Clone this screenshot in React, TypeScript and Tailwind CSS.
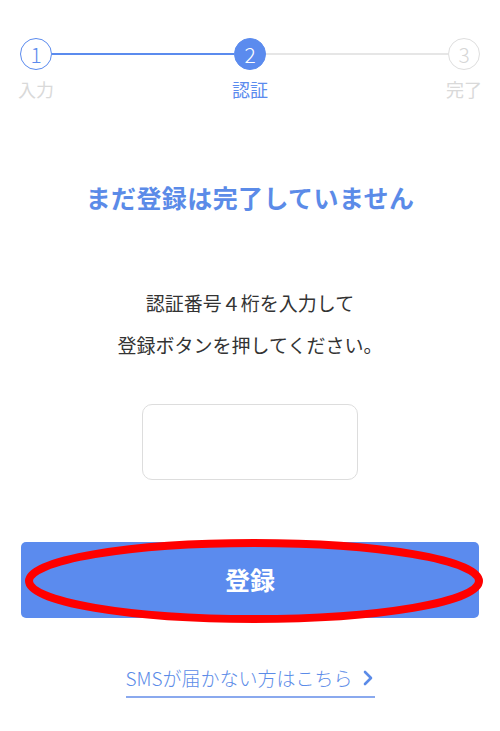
import React from 'react';

const font = { fontFamily: '"Noto Sans CJK JP", "Noto Sans", sans-serif' };

type StepState = 'done' | 'current' | 'todo';

function Step({ n, label, state }: { n: number; label: string; state: StepState }) {
  const circle =
    state === 'current'
      ? 'bg-[#5b8bee] border-[#5b8bee] text-white'
      : state === 'done'
        ? 'bg-white border-[#5b8bee] text-[#5b8bee]'
        : 'bg-white border-[#dedede] text-[#d6d6d6]';
  const text = state === 'current' ? 'text-[#5b8bee]' : 'text-[#d9d9d9]';
  return (
    <div className="flex w-8 flex-col items-center">
      <div
        className={`flex h-8 w-8 items-center justify-center rounded-full border-[1.5px] text-[21px] font-light leading-none ${circle}`}
      >
        {n}
      </div>
      <span className={`mt-[8px] whitespace-nowrap text-[18px] leading-[22px] ${text}`}>{label}</span>
    </div>
  );
}

export default function App() {
  return (
    <div className="min-h-[731px] w-[500px] bg-white" style={font}>
      {/* stepper */}
      <div className="flex items-start px-5 pt-[38px]">
        <Step n={1} label="入力" state="done" />
        <div className="mt-[15px] h-[2px] flex-1 bg-[#5b8bee]" />
        <Step n={2} label="認証" state="current" />
        <div className="mt-[15px] h-[2px] flex-1 bg-[#e6e6e6]" />
        <Step n={3} label="完了" state="todo" />
      </div>

      <h1 className="mt-[79px] text-center text-[25px] font-bold leading-[36px] tracking-[0.4px] text-[#5b8be8]">
        まだ登録は完了していません
      </h1>

      <div className="mt-[67px] text-center text-[19px] leading-[42px] text-[#333333]">
        <p>認証番号４桁を入力して</p>
        <p>登録ボタンを押してください。</p>
      </div>

      <div className="mt-[38px] flex justify-center">
        <input
          type="text"
          inputMode="numeric"
          className="h-[76px] w-[216px] rounded-[10px] border border-[#dddddd] bg-white outline-none"
        />
      </div>

      <div className="relative mx-[21px] mt-[62px]">
        <button className="flex h-[76px] w-full items-center justify-center rounded-[5px] bg-[#5b8bee] text-[25px] font-bold text-white">
          登録
        </button>
        <svg className="pointer-events-none absolute left-0 top-0 h-[76px] w-full overflow-visible" viewBox="0 0 458 76">
          <ellipse cx="233" cy="39" rx="225" ry="38" fill="none" stroke="#ff0000" strokeWidth="8" />
        </svg>
      </div>

      <div className="mt-[47px] flex justify-center">
        <a className="flex items-center gap-[10px] border-b-2 border-[#8aa9ee] pb-[5px] text-[19px] font-light leading-[26px] text-[#5b8be8]">
          <span>SMSが届かない方はこちら</span>
          <svg width="10" height="16" viewBox="0 0 10 16" className="mr-[2px]">
            <path d="M2 2 L8 8 L2 14" fill="none" stroke="#5b8be8" strokeWidth="2.6" strokeLinecap="round" strokeLinejoin="round" />
          </svg>
        </a>
      </div>
    </div>
  );
}
